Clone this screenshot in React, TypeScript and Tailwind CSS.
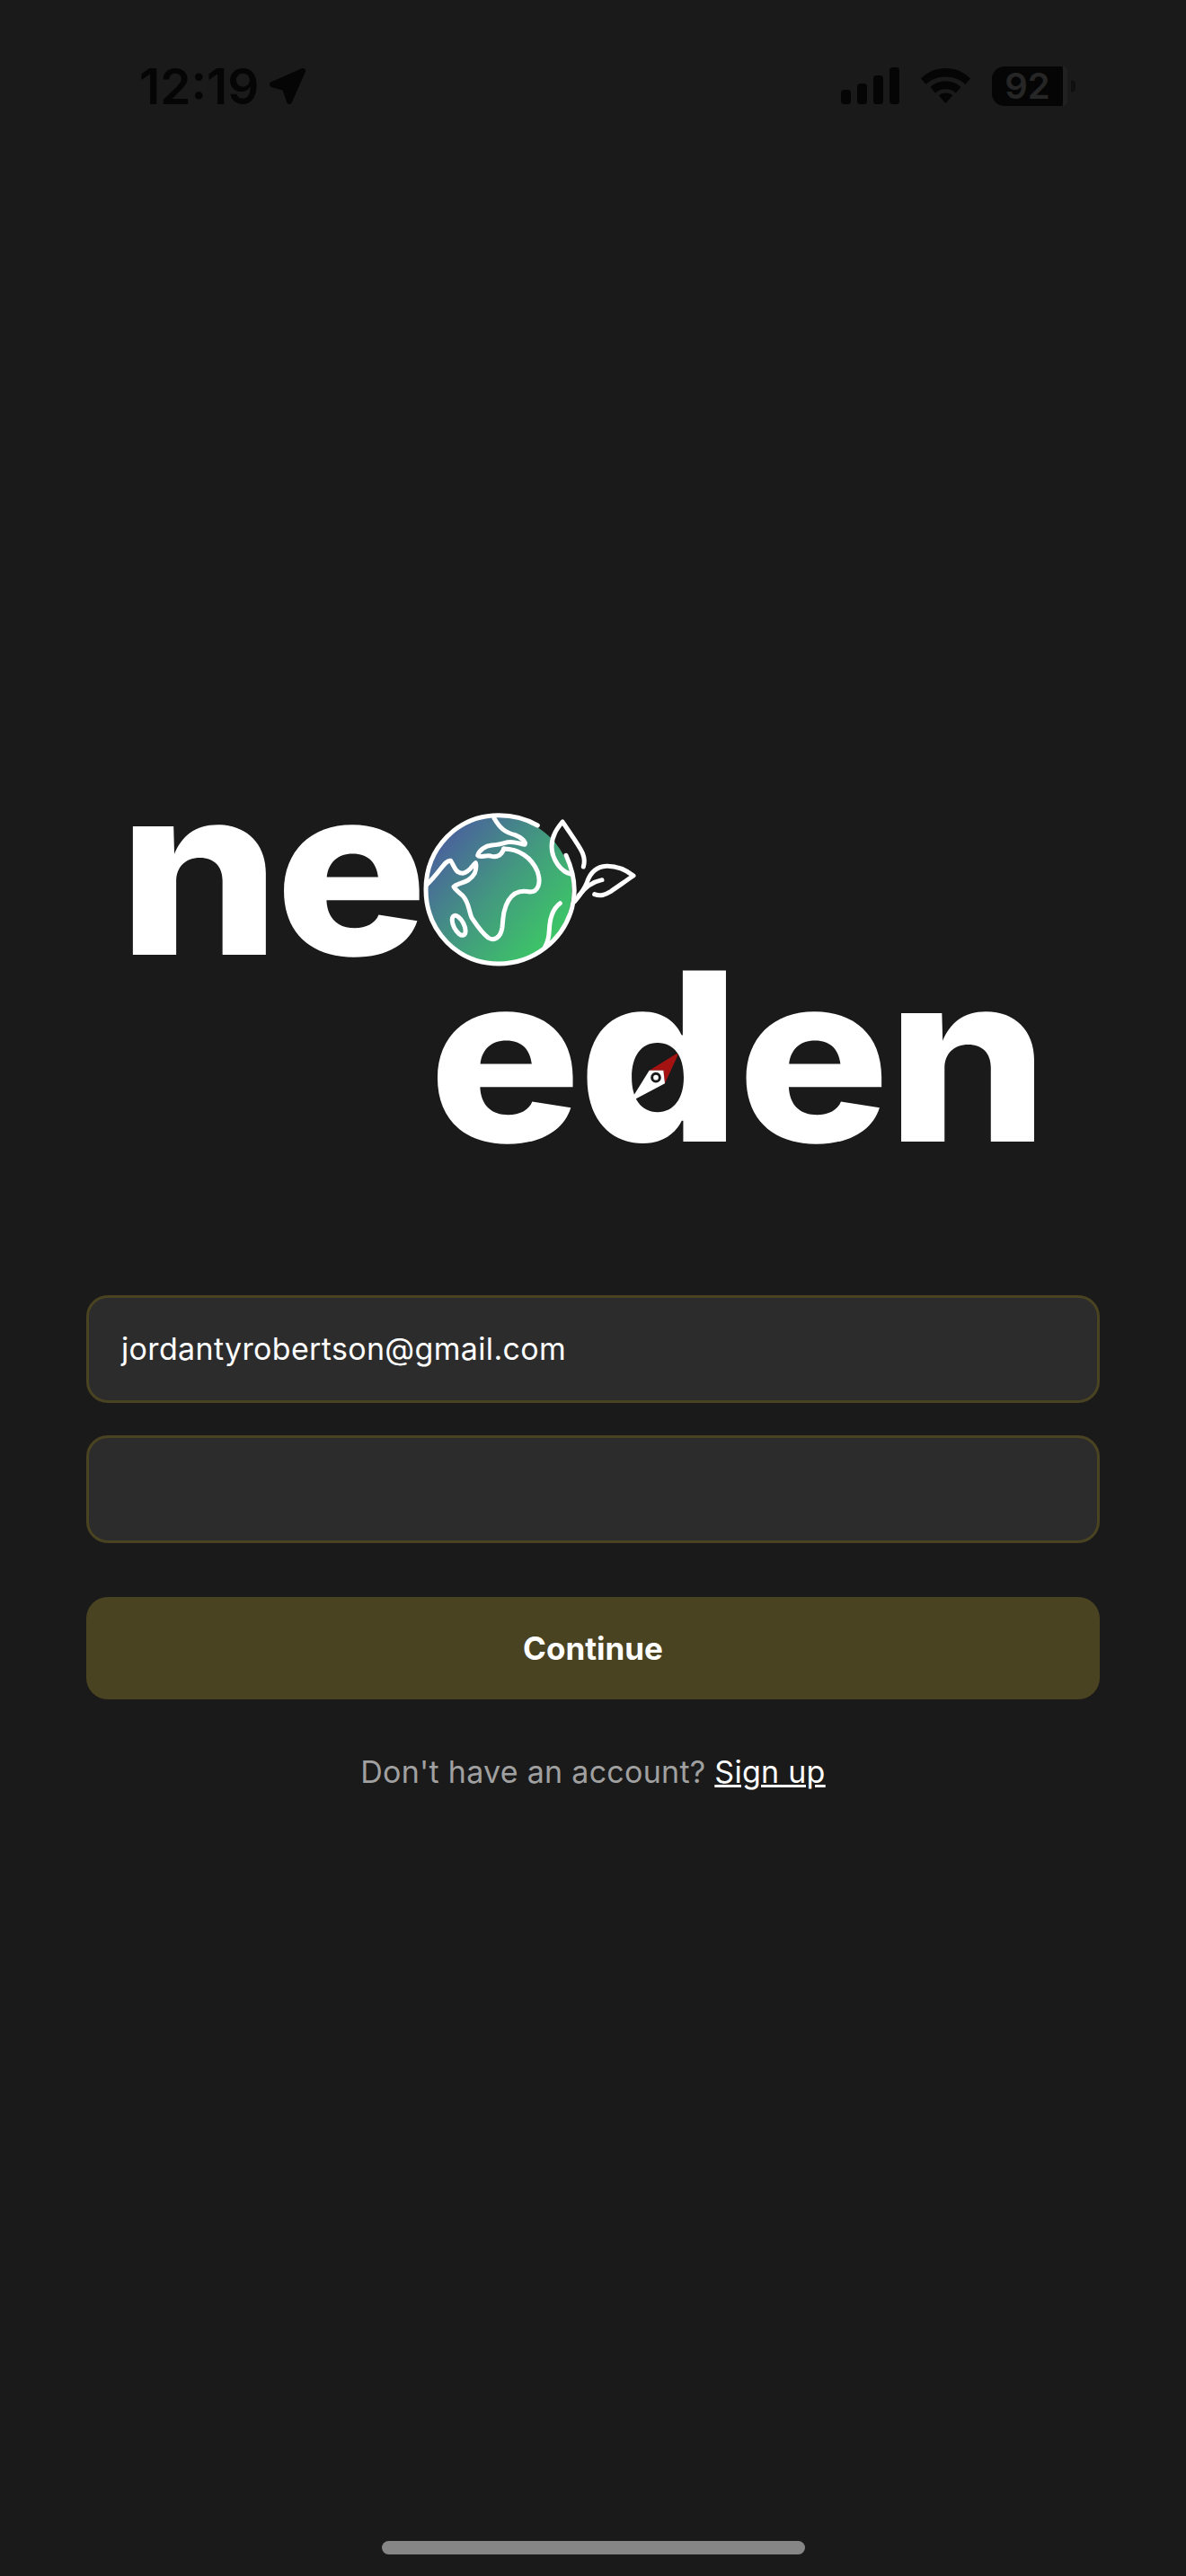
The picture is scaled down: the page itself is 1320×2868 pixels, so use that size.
function SignalBars() {
  return (
    <svg width="65" height="42" viewBox="0 0 65 42" className="fill-[#050505]">
      <rect x="0" y="25" width="11" height="16" rx="3.5" />
      <rect x="18" y="18" width="11" height="23" rx="3.5" />
      <rect x="36" y="9" width="11" height="32" rx="3.5" />
      <rect x="54" y="0" width="11" height="41" rx="3.5" />
    </svg>
  );
}

function Wifi() {
  return (
    <svg width="57" height="42" viewBox="0 0 60 42" className="fill-[#050505]">
      <path d="M30 0C19 0 9 4 1 12l6 7c6-6 14-9 23-9s17 3 23 9l6-7C51 4 41 0 30 0Z" />
      <path d="M30 15c-7 0-13 2.500-18 7l6 7c3-3 7-4.500 12-4.500s9 1.500 12 4.500l6-7c-5-4.500-11-7-18-7Z" />
      <path d="M30 29c-3.500 0-6 1-8 3l8 9 8-9c-2-2-4.500-3-8-3Z" />
    </svg>
  );
}

function Battery() {
  return (
    <div className="flex items-center">
      <div className="flex h-[44px] w-[79px] items-center justify-center rounded-l-[14px] rounded-r-[2px] bg-[#050505] text-[40px] leading-none font-semibold text-[#262626]">
        92
      </div>
      <div className="h-[44px] w-[5px] rounded-r-[12px] bg-[#212121]" />
      <div className="ml-[4px] h-[14px] w-[5px] rounded-r-[6px] bg-[#101010]" />
    </div>
  );
}

function LocationArrow() {
  return (
    <svg width="42" height="42" viewBox="0 0 42 42" className="fill-[#050505] stroke-[#050505]">
      <path d="M38 4L4 19L18 23L23 38Z" strokeWidth="6" strokeLinejoin="round" />
    </svg>
  );
}

function StatusBar() {
  return (
    <div className="flex items-center justify-between pt-[74px] pr-[123px] pl-[155px]">
      <div className="flex items-center gap-[10px]">
        <span className="text-[55px] leading-[44px] font-semibold text-[#050505]">12:19</span>
        <LocationArrow />
      </div>
      <div className="flex items-center gap-[23px]">
        <SignalBars />
        <Wifi />
        <Battery />
      </div>
    </div>
  );
}

function Globe() {
  return (
    <svg width="260" height="190" viewBox="0 0 780 570" fill="none" className="shrink-0">
      <defs>
        <linearGradient id="globeFill" x1="90" y1="120" x2="500" y2="460" gradientUnits="userSpaceOnUse">
          <stop offset="0" stopColor="#4a5f9e" />
          <stop offset="0.5" stopColor="#43997f" />
          <stop offset="1" stopColor="#3cc965" />
        </linearGradient>
      </defs>
      <circle cx="285" cy="304" r="245" fill="url(#globeFill)" />
      <g stroke="#fff" strokeWidth="15" strokeLinecap="round" strokeLinejoin="round">
        <path d="M415 90C375 66 330 56 285 56C148 56 42 166 42 304C42 442 148 552 285 552C400 552 500 475 530 365C542 320 542 260 510 190" />
        <path d="M270 66C290 100 305 112 340 122C360 130 378 145 372 154C350 150 335 142 315 146C295 152 285 155 262 156C240 158 220 172 215 190C222 200 240 188 258 192C275 198 295 192 302 168" />
        <path d="M302 168C350 168 395 195 415 245C428 285 415 312 390 312C360 305 335 312 318 340C300 370 300 400 297 430C292 465 270 478 250 465C225 445 210 420 195 398C185 375 185 345 165 325C150 310 140 305 135 295C150 280 185 285 205 250C210 235 212 225 208 215C195 225 190 245 165 250C140 250 135 222 125 208C105 205 95 240 45 288" />
        <ellipse cx="152" cy="424" rx="17" ry="36" transform="rotate(-27 152 424)" />
        <path d="M490 350C465 368 458 395 455 425C453 455 452 475 440 495" />
        <path d="M568 228C578 195 560 170 540 140C525 118 510 95 498 78C480 100 462 125 462 160C462 205 495 245 525 252" />
        <path d="M605 320C625 328 640 322 660 310C685 293 710 275 735 258C705 235 680 225 645 226C610 228 590 250 580 280C572 300 555 325 538 345" />
        <path d="M630 272C600 278 575 295 552 325" />
      </g>
    </svg>
  );
}

function CompassNeedle() {
  return (
    <svg viewBox="0 0 390 330" width="130" height="110">
      <path d="M188 128L276 74Q286 68 283 78L240 172L235 128Z" fill="#a51212" />
      <path d="M188 128L235 128L240 172L138 226Q126 230 131 220Z" fill="#fff" />
      <circle cx="210" cy="152" r="13" fill="#fff" stroke="#1a1a1a" strokeWidth="9" />
    </svg>
  );
}

function Logo() {
  return (
    <div className="mt-[771px] flex flex-col font-['Inter',sans-serif] font-extrabold text-white">
      <div className="flex h-[190px] items-start pl-[132px]">
        <span className="mt-[-71px] w-[328px] shrink-0 origin-left scale-x-[1.08] text-[262px] leading-[300px] tracking-[-0.02em]">
          ne
        </span>
        <Globe />
      </div>
      <div className="relative flex h-[230px] pl-[477px]">
        <span className="mt-[-53px] origin-left scale-x-[1.08] text-[262px] leading-[300px] tracking-[-0.012em]">
          eden
        </span>
        <div className="absolute top-[70px] left-[660px]">
          <CompassNeedle />
        </div>
      </div>
    </div>
  );
}

function Field({ value }: { value?: string }) {
  return (
    <div className="flex h-[120px] items-center rounded-[24px] border-[3px] border-[#4a4321] bg-[#2c2c2c] px-[36px] text-[34px] leading-none tracking-[0.01em] text-white">
      {value}
    </div>
  );
}

export default function App() {
  return (
    <div className="relative flex min-h-[2868px] flex-col bg-[#1a1a1a] font-['Inter',sans-serif]">
      <StatusBar />
      <Logo />
      <div className="mt-[133px] flex flex-col px-[96px]">
        <div className="flex flex-col gap-[36px]">
          <Field value="jordantyrobertson@gmail.com" />
          <Field />
        </div>
        <button className="mt-[60px] h-[114px] rounded-[24px] bg-[#4a4321] text-[35px] font-bold text-white">
          Continue
        </button>
        <p className="mt-[60px] text-center text-[34px] leading-[42px] tracking-[0.008em] text-[#a0a0a0]">
          Don't have an account? <a className="text-white underline">Sign up</a>
        </p>
      </div>
      <div className="absolute bottom-[24px] left-[425px] h-[15px] w-[471px] rounded-full bg-[#868686]" />
    </div>
  );
}
